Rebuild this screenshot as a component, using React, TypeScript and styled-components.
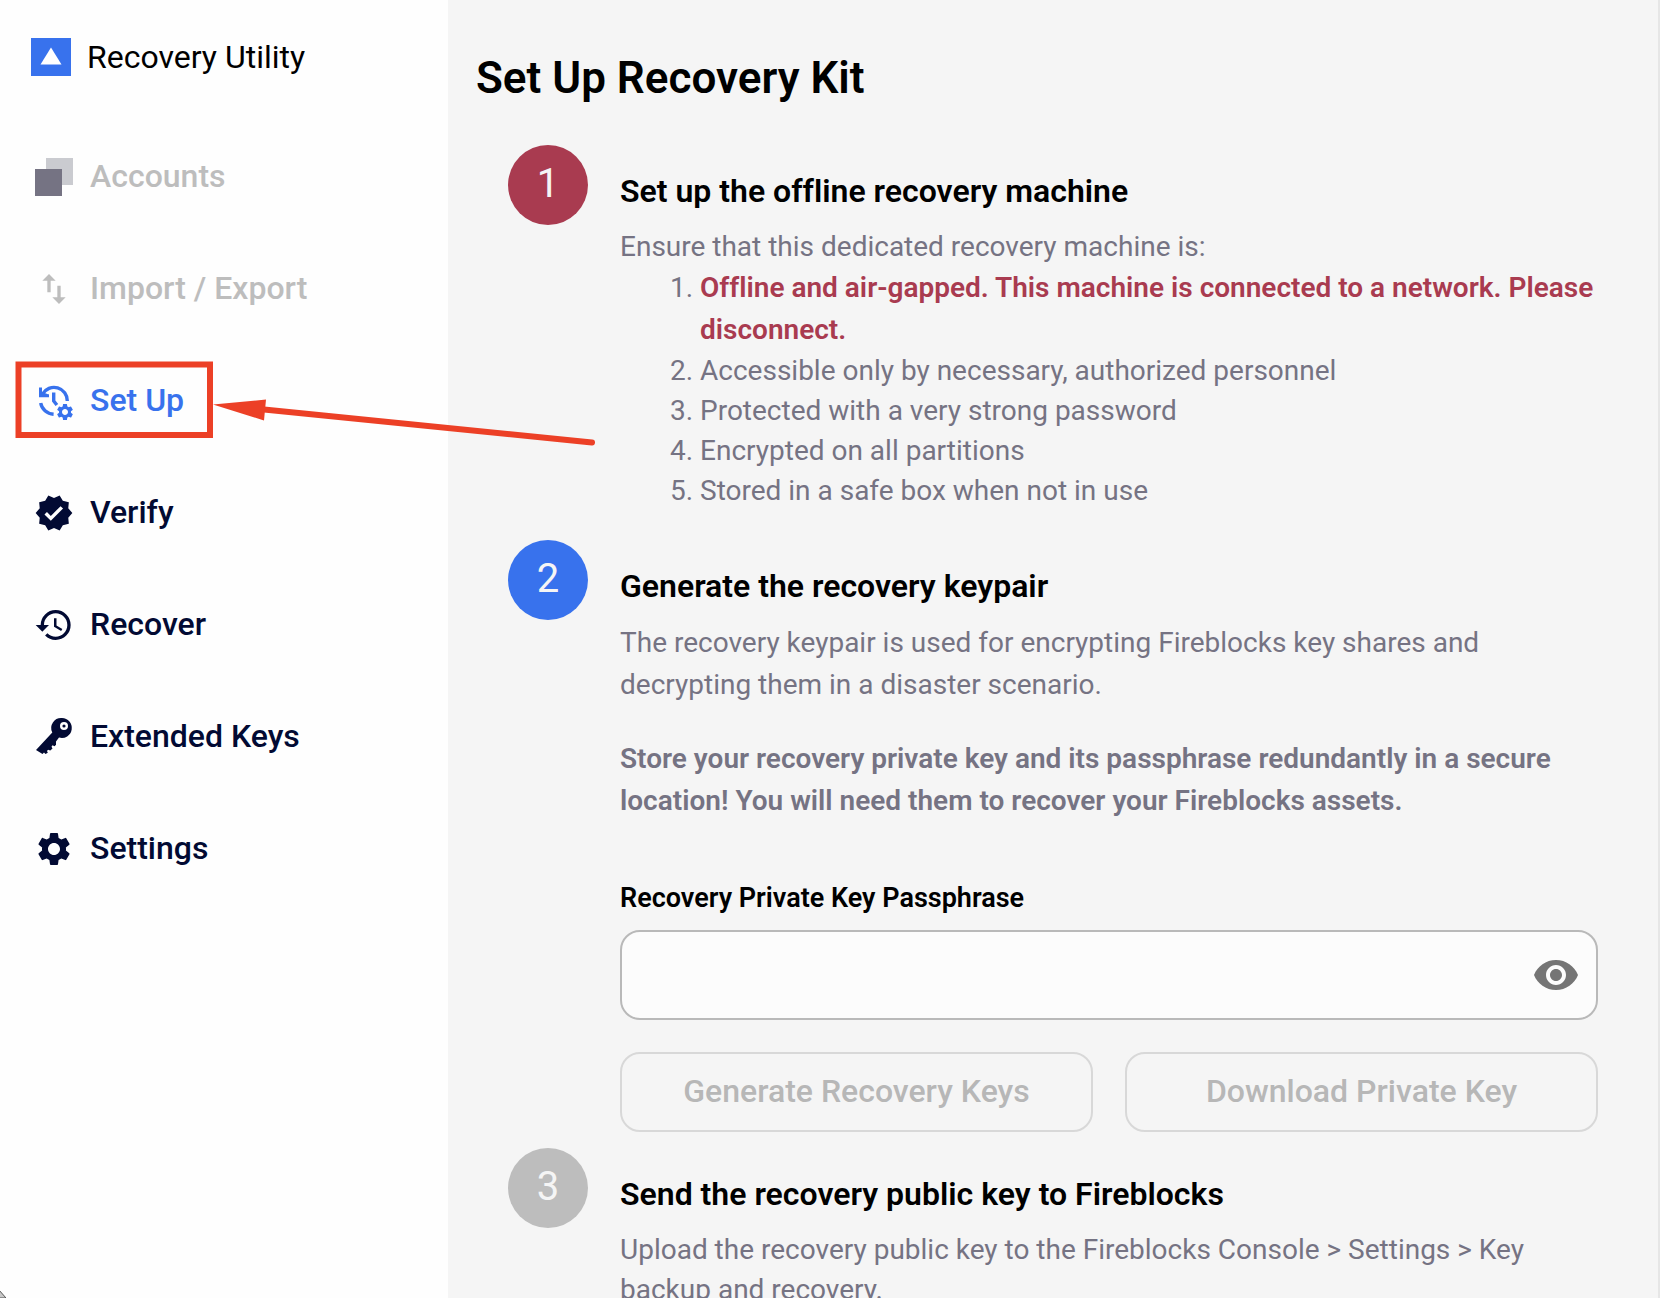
import React, { useState } from "react";
import styled, { createGlobalStyle } from "styled-components";
import { MdHistory, MdImportExport, MdSettings, MdVerified, MdVisibility } from "react-icons/md";

const GlobalStyle = createGlobalStyle`
  *, *::before, *::after { box-sizing: border-box; }
  html, body, #root { height: 100%; }
  body {
    margin: 0;
    background: #f5f5f5;
    color: #000;
    font-family: Roboto, "Liberation Sans", sans-serif;
    font-variant-ligatures: none;
  }
`;

const Shell = styled.div`
  display: grid;
  grid-template-columns: 448px minmax(0, 1fr);
  height: 100vh;
  overflow: hidden;
  border-right: 2px solid #e6e6e6;
`;

const Sidebar = styled.aside`
  position: relative;
  background: #fefefe;
  padding: 38px 28px 0 16px;
`;

const Brand = styled.div`
  display: flex;
  align-items: center;
  gap: 16px;
  height: 38px;
  padding-left: 15px;
  margin-bottom: 60px;
  font-size: 32px;
`;

const Nav = styled.nav`
  display: flex;
  flex-direction: column;
  gap: 32px;
`;

type Tone = "normal" | "active" | "disabled";
const toneColor = { normal: "#020a33", active: "#3872ed", disabled: "#bdbdbd" };

const NavLink = styled.a<{ $tone: Tone }>`
  display: flex;
  align-items: center;
  gap: 16px;
  height: 80px;
  padding-left: 18px;
  border-radius: 20px;
  color: ${(p) => toneColor[p.$tone]};
  font-size: 32px;
  font-weight: 500;
  text-decoration: none;
`;

const NavIcon = styled.span`
  display: flex;
  flex: none;
  padding-top: 2px;
  > svg { width: 40px; height: 40px; }
`;

const Callout = styled.svg`
  position: absolute;
  left: 0;
  top: 350px;
  z-index: 1;
  pointer-events: none;
`;

const CornerMark = styled.svg`
  position: absolute;
  left: 0;
  bottom: 0;
`;

const Main = styled.main`
  padding: 52px 60px 0 28px;
  min-width: 0;
  overflow-y: auto;
  scrollbar-width: none;
`;

const Title = styled.h1`
  margin: 0 0 41px;
  font-size: 44px;
  line-height: 52px;
  font-weight: 600;
`;

const Steps = styled.div`
  display: flex;
  flex-direction: column;
  gap: 16px;
  padding-left: 32px;
`;

const Step = styled.section`
  display: grid;
  grid-template-columns: 80px minmax(0, 1fr);
  column-gap: 32px;
`;

const Badge = styled.div<{ $color: string }>`
  display: flex;
  align-items: center;
  justify-content: center;
  width: 80px;
  height: 80px;
  padding-bottom: 4px;
  border-radius: 50%;
  background: ${(p) => p.$color};
  color: #f5f5f5;
  font-size: 40px;
`;

const Body = styled.div<{ $end?: number }>`
  padding-top: 22px;
  padding-bottom: ${(p) => p.$end ?? 0}px;
  color: #757383;
  font-size: 28px;
  line-height: 40px;
`;

const Heading = styled.h2`
  margin: 0 0 12px;
  color: #000;
  font-size: 32px;
  line-height: 48px;
  font-weight: 600;
`;

const List = styled.ol`
  margin: 0;
  padding-left: 80px;
`;

const Warning = styled.strong`
  display: block;
  color: #a93b50;
  line-height: 42px;
  font-weight: 600;
`;

const Text = styled.p<{ $strong?: boolean }>`
  margin: 0 0 32px;
  line-height: 42px;
  font-weight: ${(p) => (p.$strong ? 600 : 400)};
`;

const Label = styled.label`
  display: block;
  margin: 56px 0 12px;
  color: #000;
  font-size: 27px;
  font-weight: 600;
`;

const Field = styled.div`
  display: flex;
  align-items: center;
  height: 90px;
  padding: 0 16px;
  border: 2px solid #b9b9b9;
  border-radius: 20px;
  background: #fcfcfc;
`;

const Input = styled.input`
  flex: 1;
  min-width: 0;
  height: 100%;
  border: 0;
  outline: 0;
  background: transparent;
  font: inherit;
`;

const IconButton = styled.button`
  display: flex;
  padding: 0;
  border: 0;
  background: none;
  color: #757575;
  svg { width: 48px; height: 48px; }
`;

const Actions = styled.div`
  display: grid;
  grid-template-columns: 1fr 1fr;
  gap: 32px;
  margin-top: 32px;
`;

const Action = styled.button`
  height: 80px;
  padding: 0 8px 2px;
  border: 2px solid #d8d8d8;
  border-radius: 20px;
  background: transparent;
  color: #b7b7b7;
  font-family: inherit;
  font-size: 32px;
  font-weight: 500;
`;

const Logo = () => (
  <svg width="40" height="38" viewBox="0 0 40 38" aria-hidden="true">
    <path fill="#3872ed" d="M0 0h40v38H0z" />
    <path fill="#fff" d="M20 9.500 30.500 26.500h-21z" />
  </svg>
);

const AccountsIcon = () => (
  <svg viewBox="0 0 40 40" aria-hidden="true">
    <path fill="#cacbd0" d="M12 1h27v27H12z" />
    <path fill="#757383" d="M1 12h27v27H1z" />
  </svg>
);

const SetUpIcon = () => (
  <svg viewBox="0 0 40 40" fill="none" stroke="currentColor" strokeWidth="3.400" aria-hidden="true">
    <path d="M8.500 13A13.300 13.300 0 0 1 33.300 20" />
    <path d="M6.700 22C7.700 28 13 32.800 19.600 33.300" />
    <path d="M19.700 11.500v8.500l3.200 4" />
    <path fill="currentColor" stroke="none" d="M5 6.500h3V11l6 2.300H15V16.300H5z" />
    <MdSettings x="21" y="21" width="20" height="20" size={20} stroke="none" />
  </svg>
);

const KeyIcon = () => (
  <svg viewBox="0 0 40 40" aria-hidden="true">
    <path
      fill="currentColor"
      fillRule="evenodd"
      d="M28 1a10 10 0 1 1-3 19.600L22 24.500v3.200l-1.500 1.500-2-1-1 1.600 1 1.700-2.200 2-2.300-.8-1 1.300.8 1.700L11.500 37l-1.500-1.500L8.500 37 2 33l16.300-17.500A10 10 0 0 1 28 1zm2 4a4 4 0 1 0 0 8 4 4 0 0 0 0-8zm0 2.400a1.600 1.600 0 1 1 0 3.200 1.600 1.600 0 0 1 0-3.200z"
    />
  </svg>
);

const items: { label: string; tone: Tone; icon: React.ReactNode }[] = [
  { label: "Accounts", tone: "disabled", icon: <AccountsIcon /> },
  { label: "Import / Export", tone: "disabled", icon: <MdImportExport /> },
  { label: "Set Up", tone: "active", icon: <SetUpIcon /> },
  { label: "Verify", tone: "normal", icon: <MdVerified /> },
  { label: "Recover", tone: "normal", icon: <MdHistory /> },
  { label: "Extended Keys", tone: "normal", icon: <KeyIcon /> },
  { label: "Settings", tone: "normal", icon: <MdSettings /> },
];

export default function App() {
  const [visible, setVisible] = useState(false);
  return (
    <>
      <GlobalStyle />
      <Shell>
        <Sidebar>
          <Brand>
            <Logo />
            <span>Recovery Utility</span>
          </Brand>
          <Nav>
            {items.map((item) => (
              <NavLink key={item.label} href="#" $tone={item.tone} aria-disabled={item.tone === "disabled"}>
                <NavIcon>{item.icon}</NavIcon>
                <span>{item.label}</span>
              </NavLink>
            ))}
          </Nav>
          <Callout width="610" height="110" viewBox="0 350 610 110" aria-hidden="true">
            <path fill="none" stroke="#ec4026" strokeWidth="6" d="M18.500 364.500h191.500v70.500H18.500z" />
            <path stroke="#ec4026" strokeWidth="6" strokeLinecap="round" d="M264 409.500 592 442.500" />
            <path fill="#ec4026" d="M213 404.500 266 399.500 264 420.500z" />
          </Callout>
          <CornerMark width="6" height="8" viewBox="0 0 6 8" aria-hidden="true">
            <path fill="#c8c8c8" stroke="#555" d="M-1 0 6 8H-1z" />
          </CornerMark>
        </Sidebar>
        <Main>
          <Title>Set Up Recovery Kit</Title>
          <Steps>
            <Step>
              <Badge $color="#a93b50">1</Badge>
              <Body $end={13}>
                <Heading>Set up the offline recovery machine</Heading>
                Ensure that this dedicated recovery machine is:
                <List>
                  <li>
                    <Warning>Offline and air-gapped. This machine is connected to a network. Please disconnect.</Warning>
                  </li>
                  <li>Accessible only by necessary, authorized personnel</li>
                  <li>Protected with a very strong password</li>
                  <li>Encrypted on all partitions</li>
                  <li>Stored in a safe box when not in use</li>
                </List>
              </Body>
            </Step>
            <Step>
              <Badge $color="#3872ed">2</Badge>
              <Body>
                <Heading>Generate the recovery keypair</Heading>
                <Text>
                  The recovery keypair is used for encrypting Fireblocks key shares and decrypting them in a disaster
                  scenario.
                </Text>
                <Text $strong>
                  Store your recovery private key and its passphrase redundantly in a secure location! You will need
                  them to recover your Fireblocks assets.
                </Text>
                <Label htmlFor="passphrase">Recovery Private Key Passphrase</Label>
                <Field>
                  <Input id="passphrase" type={visible ? "text" : "password"} />
                  <IconButton type="button" aria-label="Show passphrase" onClick={() => setVisible(!visible)}>
                    <MdVisibility />
                  </IconButton>
                </Field>
                <Actions>
                  <Action disabled>Generate Recovery Keys</Action>
                  <Action disabled>Download Private Key</Action>
                </Actions>
              </Body>
            </Step>
            <Step>
              <Badge $color="#bdbdbd">3</Badge>
              <Body>
                <Heading>Send the recovery public key to Fireblocks</Heading>
                Upload the recovery public key to the Fireblocks Console &gt; Settings &gt; Key backup and recovery.
              </Body>
            </Step>
          </Steps>
        </Main>
      </Shell>
    </>
  );
}
